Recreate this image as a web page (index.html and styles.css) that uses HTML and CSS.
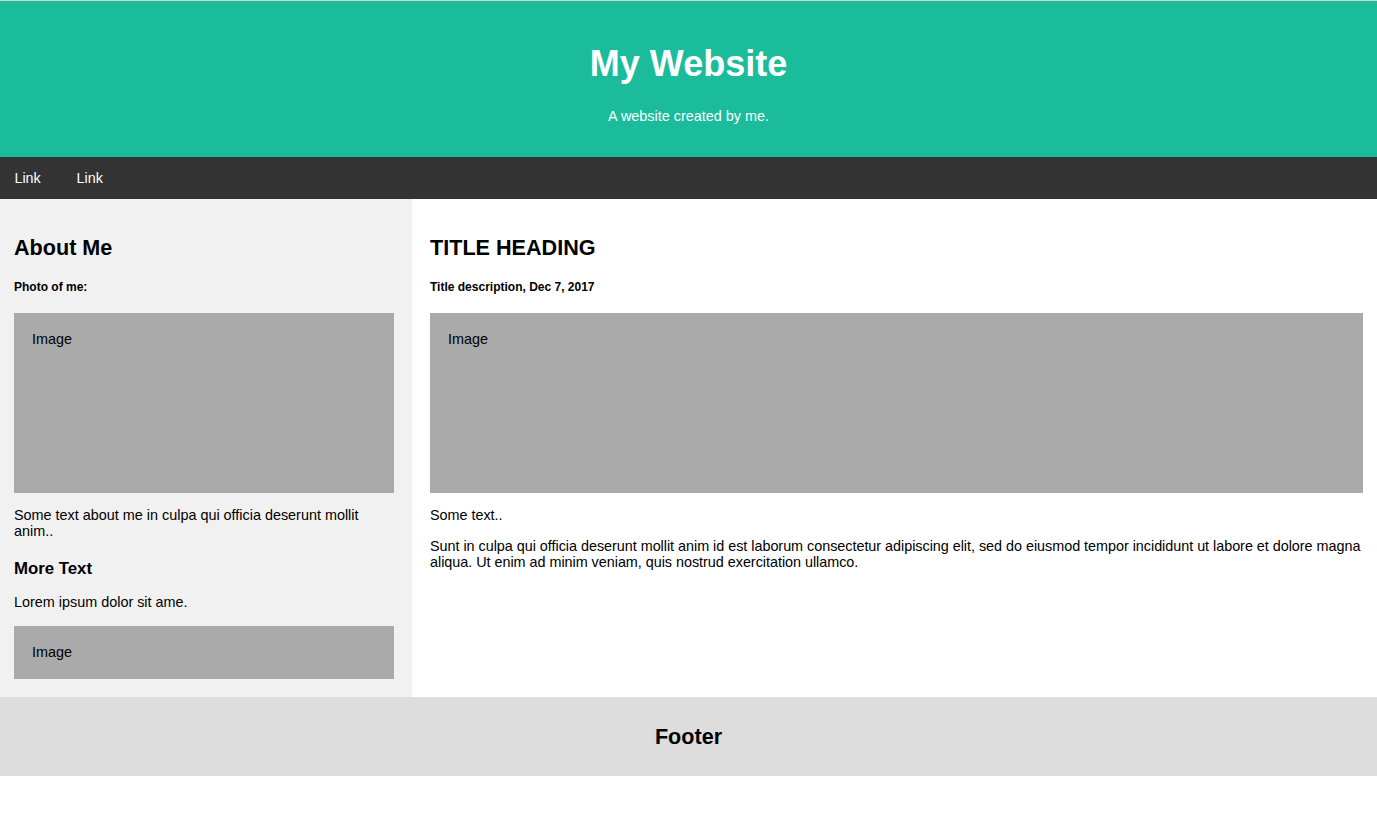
FILE: index.html
```html
<!DOCTYPE html>
<html lang="en">
<head>
    <meta charset="UTF-8">
    <meta name="viewport" content="width=device-width, initial-scale=1.0">
    <title>My Website</title>
    <link rel="stylesheet" href="styles.css">
</head>
<body>
    <div class="header">
        <h1>My Website</h1>
        <p>A website created by me.</p>
    </div>

    <div class="navbar">
        <a href="#">Link</a>
        <a href="#">Link</a>
    </div>

    <div class="row">
        <div class="side">
            <h2>About Me</h2>
            <h5>Photo of me:</h5>
            <div class="fakeimg tall">Image</div>
            <p>Some text about me in culpa qui officia deserunt mollit anim..</p>
            <h3>More Text</h3>
            <p>Lorem ipsum dolor sit ame.</p>
            <div class="fakeimg short">Image</div>
        </div>
        <div class="main">
            <h2>TITLE HEADING</h2>
            <h5>Title description, Dec 7, 2017</h5>
            <div class="fakeimg tall">Image</div>
            <p>Some text..</p>
            <p>Sunt in culpa qui officia deserunt mollit anim id est laborum consectetur adipiscing elit, sed do eiusmod tempor incididunt ut labore et dolore magna aliqua. Ut enim ad minim veniam, quis nostrud exercitation ullamco.</p>
        </div>
    </div>

    <div class="footer">
        <h2>Footer</h2>
    </div>
</body>
</html>
```

FILE: styles.css
```css
* {
    box-sizing: border-box;
}
body {
    font-family: "Liberation Sans", Arial, sans-serif;
    font-size: 14.4px;
    margin: 0;
    color: #000;
}
h2 {
    font-size: 21.6px;
}
h3 {
    font-size: 16.8px;
    margin: 19.8px 0 14.8px;
}
h5 {
    font-size: 12px;
    margin: 19px 0;
}
.header {
    border-top: 1px solid #d4d4d4;
    padding: 18px 18px 19px;
    text-align: center;
    background: #1abc9c;
    color: white;
}
.header h1 {
    font-size: 36px;
    line-height: 41px;
    margin: 24px 0;
}
.header p {
    line-height: 17px;
    margin: 0 0 13px;
}
.navbar {
    display: flex;
    gap: 7px;
    background-color: #333;
}
.navbar a {
    color: white;
    line-height: 18px;
    padding: 12px 14.4px;
    text-decoration: none;
}
.row {
    display: flex;
}
.side {
    width: 412px;
    flex-shrink: 0;
    background-color: #f1f1f1;
    padding: 18px 18px 18px 14px;
}
.side p {
    margin-bottom: 16.4px;
}
.main {
    flex: 1;
    background-color: white;
    padding: 18px 14px 18px 18px;
}
.main p {
    letter-spacing: -0.03px;
}
.fakeimg {
    background-color: #aaa;
    width: 100%;
    padding: 18px;
}
.fakeimg.tall {
    height: 180px;
}
.fakeimg.short {
    height: 53px;
}
.footer {
    padding: 9px 9px 8px;
    text-align: center;
    background: #ddd;
}
```
